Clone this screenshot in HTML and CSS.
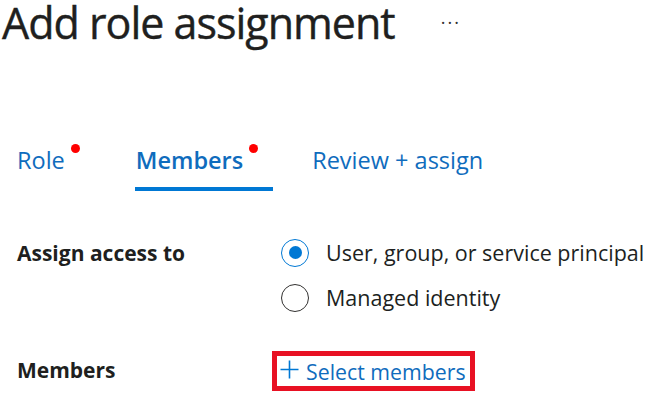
FILE: index.html
```html
<!DOCTYPE html>
<html>
<head>
<meta charset="utf-8">
<link rel="stylesheet" href="styles.css">
</head>
<body>
<div class="page">
  <header class="header">
    <h1 class="title">Add role assignment</h1>
    <span class="more">···</span>
  </header>
  <nav class="tabs">
    <a class="tab tab-role"><span>Role</span><i class="dot"></i></a>
    <a class="tab tab-members active"><span>Members</span><i class="dot"></i></a>
    <a class="tab tab-review"><span>Review + assign</span></a>
  </nav>
  <div class="form">
    <div class="row">
      <div class="label">Assign access to</div>
      <div class="options">
        <label class="radio checked"><span class="circle"></span>User, group, or service principal</label>
        <label class="radio"><span class="circle"></span>Managed identity</label>
      </div>
    </div>
    <div class="row members-row">
      <div class="label">Members</div>
      <div class="select-box">
        <a class="select-link"><svg class="plus" width="19" height="19" viewBox="0 0 19 19"><path d="M9.5 0.5V18.5M0.5 9.5H18.5" stroke="#0078d4" stroke-width="1.6" fill="none"/></svg>Select members</a>
      </div>
    </div>
  </div>
</div>
</body>
</html>
```
FILE: styles.css
```css
html, body {
  margin: 0;
  padding: 0;
  background: #fff;
}
body {
  font-family: "Open Sans", "Noto Sans", sans-serif;
  color: #323130;
}
.page {
  width: 649px;
  height: 397px;
  overflow: hidden;
}
.header {
  display: flex;
  align-items: center;
  gap: 46px;
  padding-left: 2px;
  height: 46px;
}
.title {
  margin: 0;
  font-weight: 400;
  font-size: 43px;
  line-height: 46px;
  color: #201f1e;
  letter-spacing: -1px;
  -webkit-text-stroke: 0.4px #201f1e;
}
.more {
  font-size: 18px;
  color: #323130;
  letter-spacing: 2px;
  margin-top: -2px;
}
.tabs {
  display: flex;
  margin-top: 96px;
  padding-left: 17px;
}
.tab {
  position: relative;
  display: flex;
  font-size: 23.5px;
  color: #0f6cbd;
  height: 49px;
  line-height: 36px;
}
.tab-members {
  margin-left: 71px;
  font-weight: 600;
  padding-right: 30px;
}
.tab-review { margin-left: 39px; }
.tab-members::after {
  content: "";
  position: absolute;
  left: -1px;
  right: 0;
  bottom: 0;
  height: 4px;
  background: #0078d4;
}
.dot {
  position: absolute;
  width: 9px;
  height: 9px;
  border-radius: 50%;
  background: #f00;
  top: 2px;
}
.tab-role .dot { right: -15px; }
.tab-members .dot { right: 15px; }
.form {
  padding-left: 17px;
  margin-top: 44px;
}
.row {
  display: grid;
  grid-template-columns: 264px 1fr;
}
.label {
  font-weight: 700;
  font-size: 21px;
  color: #201f1e;
  line-height: 40px;
  margin-top: -2px;
}
.options {
  display: flex;
  flex-direction: column;
  gap: 10px;
}
.radio {
  display: flex;
  align-items: center;
  gap: 17px;
  font-size: 21.5px;
  line-height: 35px;
  color: #201f1e;
}
.circle {
  width: 26px;
  height: 26px;
  border: 1.5px solid #323130;
  border-radius: 50%;
  box-sizing: content-box;
  display: flex;
  align-items: center;
  justify-content: center;
  flex: none;
}
.radio.checked .circle { border-color: #0078d4; }
.radio.checked .circle::after {
  content: "";
  width: 13px;
  height: 13px;
  border-radius: 50%;
  background: #0078d4;
}
.members-row {
  margin-top: 36px;
  align-items: center;
}
.select-box {
  margin-left: -9px;
  width: 190px;
  height: 30px;
  border: 5px solid #e81123;
  display: flex;
  align-items: center;
  padding-left: 3px;
}
.select-link {
  display: flex;
  align-items: center;
  gap: 7px;
  font-size: 21.3px;
  color: #0f6cbd;
  white-space: nowrap;
}
.plus { margin-top: -3px; flex: none; }
```
